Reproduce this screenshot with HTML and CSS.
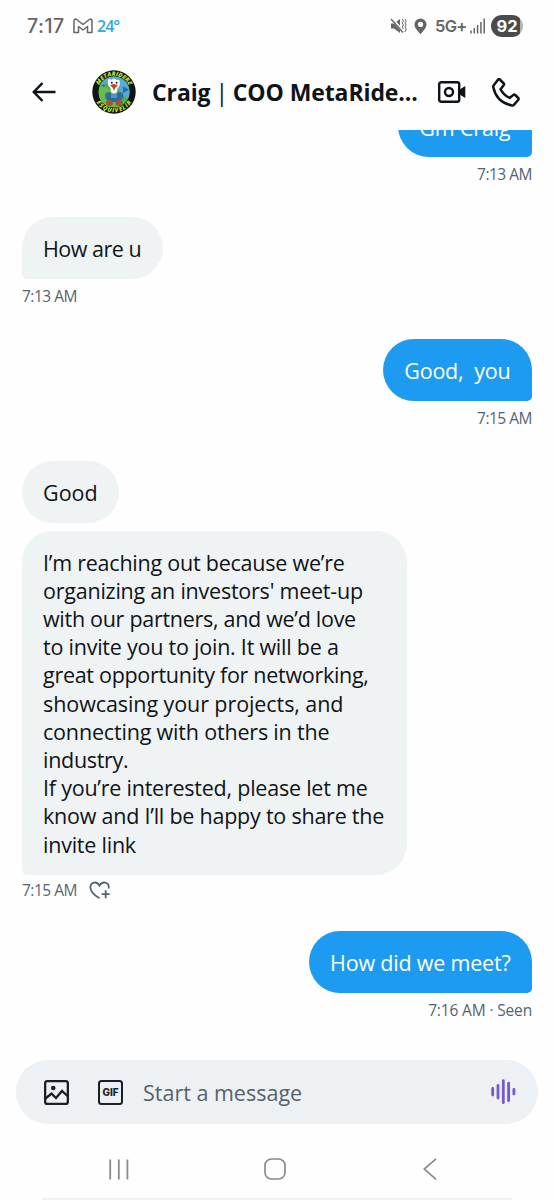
FILE: index.html
```html
<!DOCTYPE html>
<html lang="en">
<head>
<meta charset="utf-8">
<title>Messages</title>
<link rel="stylesheet" href="styles.css">
</head>
<body>
<div class="screen">
  <div class="status">
    <div class="status-left">
      <span class="clock">7:17</span>
      <svg class="mail" width="20" height="16" viewBox="0 0 20 16" fill="none" stroke="#666" stroke-width="1.500" stroke-linejoin="round"><path d="M1 14.500V3Q1 1 3 1L10 6.500 17 1Q19 1 19 3V14.500H14.500V8.500L10 12 5.500 8.500V14.500Z"/></svg>
      <span class="temp">24°</span>
    </div>
    <div class="status-right">
      <svg width="17" height="16" viewBox="0 0 17 16"><path d="M1 5.500H4L10 1V15L4 10.500H1Z" fill="#666"/><path d="M1.500 .5 14 14.500" stroke="#fff" stroke-width="3"/><path d="M1 1 13 14.500" stroke="#666" stroke-width="1.500"/><path d="M12 1l1.500 2L12 5l1.500 2L12 9l1.500 2M15 1l1.200 2L15 5l1.200 2L15 9l1.200 2L15 14" fill="none" stroke="#666" stroke-width="1"/></svg>
      <svg class="pin" width="13" height="17" viewBox="0 0 13 17"><path fill="#666" fill-rule="evenodd" d="M6.500 .5a6 6 0 0 1 6 6c0 3.500-3 6-6 9.800C3.500 12.500.5 10 .5 6.500a6 6 0 0 1 6-6Zm0 3.300a2.600 2.600 0 1 0 0 5.200 2.600 2.600 0 0 0 0-5.200Z"/></svg>
      <span class="net">5G+</span>
      <svg class="signal" width="15" height="16" viewBox="0 0 15 16" stroke="#666" stroke-width="1.500"><path d="M1 15.500v-3M4.300 15.500V10M7.600 15.500V7M10.900 15.500V4M14.200 15.500V.5"/></svg>
      <span class="battery">92</span>
    </div>
  </div>
  <div class="header">
    <svg class="back" width="24" height="20" viewBox="0 0 24 20" fill="none" stroke="#0f1419" stroke-width="2.500"><path d="M23.500 10H2M10.500 1 1.800 10l8.700 9"/></svg>
    <svg class="avatar" width="44" height="44" viewBox="0 0 44 44">
      <defs>
        <clipPath id="disc"><circle cx="22" cy="22" r="15.500"/></clipPath>
        <path id="arc-top" d="M5.800 22a16.200 16.200 0 0 1 32.400 0"/>
        <path id="arc-bottom" d="M1.700 22a20.300 20.300 0 0 0 40.600 0"/>
      </defs>
      <circle cx="22" cy="22" r="21.700" fill="#101414"/>
      <g clip-path="url(#disc)">
        <rect width="44" height="44" fill="#4fb04c"/>
        <path d="M5 5h34v25q-8-3-12-10T14 13L5 17Z" fill="#59a9dc"/>
        <path d="M7 17q8-3 13 6t8 14H7Z" fill="#65bd50"/>
        <path d="M10 14l4 2-3 1ZM31 16l6 4-6 3Z" fill="#2374a5"/>
        <ellipse cx="16.500" cy="26" rx="3.500" ry="4" fill="#3d7094"/>
        <ellipse cx="28" cy="26" rx="3.500" ry="4" fill="#3d7094"/>
        <path d="M16 23h12l1 9H15Z" fill="#286b9e"/>
        <path d="M19 23h6v5h-6Z" fill="#5292bb"/>
        <ellipse cx="17.500" cy="33" rx="3.500" ry="3" fill="#a6542c"/>
        <ellipse cx="27" cy="33" rx="3.500" ry="3" fill="#a6542c"/>
      </g>
      <path d="M16 10q2-2 3.500 0Q22 7 24.500 10q3-1 3.500 2 0 5-2.500 6l-.5 4q-3 3-6 0l-.5-4Q15 15 16 10Z" fill="#fff"/>
      <circle cx="19.800" cy="12.800" r="1" fill="#222"/><circle cx="24.600" cy="12.800" r="1" fill="#222"/>
      <path d="M18 15.500q4-3 8 0l-2.500 2-1.500 3-1.500-3Z" fill="#c6432c"/>
      <text class="ring"><textPath href="#arc-top" startOffset="50%" text-anchor="middle" textLength="37">METARIDERZ</textPath></text>
      <text class="ring"><textPath href="#arc-bottom" startOffset="50%" text-anchor="middle" textLength="42">ESQUIVELIR</textPath></text>
    </svg>
    <div class="title">Craig <span class="bar">|</span> COO MetaRide...</div>
    <svg class="video" width="28" height="22" viewBox="0 0 28 22" fill="none" stroke="#0f1419" stroke-width="2.400"><rect x="1.200" y="1.200" width="20" height="19.600" rx="2"/><circle cx="11" cy="11" r="4"/><path d="M21 10 26.500 6.500v9L21 12" fill="#0f1419" stroke-width="1.600"/></svg>
    <svg class="phone" width="28" height="29" viewBox="0 0 28 29" fill="none" stroke="#0f1419" stroke-width="2.500" stroke-linejoin="round"><path d="M7.800 1.500 11.800 5.500Q12.500 6.300 11.700 7.200L8.500 11.200Q11.500 17 17.600 20L21.400 16.900Q22.300 16.200 23.200 17L26.300 20Q27 20.800 26.300 21.700L22 26.800Q21.200 27.600 19.900 27.400 4.500 24.500 1.300 9.300 1 7.800 2.100 6.800L6.200 1.500Q7 .7 7.800 1.500Z"/></svg>
  </div>
  <div class="thread">
    <div class="row out first"><div class="bubble"><span class="t-gm">Gm Craig</span></div><div class="meta">7:13 AM</div></div>
    <div class="row in"><div class="bubble"><span class="t-how">How are u</span></div><div class="meta">7:13 AM</div></div>
    <div class="row out"><div class="bubble"><span class="t-you">Good,&nbsp; you</span></div><div class="meta">7:15 AM</div></div>
    <div class="row in grouped"><div class="bubble round"><span class="t-good">Good</span></div></div>
    <div class="row in long"><div class="bubble"><span>I’m reaching out because we’re</span><span>organizing an investors' meet-up</span><span class="tight">with our partners, and we’d love</span><span>to invite you to join. It will be a</span><span class="tight">great opportunity for networking,</span><span class="loose">showcasing your projects, and</span><span class="open">connecting with others in the</span><span class="tight">industry.</span><span>If you’re interested, please let me</span><span>know and I’ll be happy to share the</span><span>invite link</span></div>
      <div class="meta">7:15 AM <svg class="heart" width="22" height="19" viewBox="0 0 22 19" fill="none" stroke="#536471" stroke-width="1.800"><path d="M10.500 17.300C5.500 14.500 1.400 11 1.400 6.300 1.400 1 7.800-.3 10.500 4.600 13.200-.3 19.800 1 19.800 6.500V7.500M16.700 9.200v8M12.700 13.200h8"/></svg></div></div>
    <div class="row out"><div class="bubble"><span class="t-meet">How did we meet?</span></div><div class="meta seen">7:16 AM · Seen</div></div>
  </div>
  <div class="composer">
    <svg width="25" height="25" viewBox="0 0 25 25" fill="none" stroke="#1b1f25" stroke-width="2.300"><rect x="1.150" y="1.150" width="22.700" height="22.700" rx="2.200"/><path d="M1.500 18.500 7.500 13.500 12 18 18 11 24 16.500"/><circle cx="9.300" cy="8" r="2.300" fill="#1b1f25" stroke="none"/></svg>
    <div class="gif">GIF</div>
    <div class="placeholder">Start a message</div>
    <svg class="voice" width="25" height="26" viewBox="0 0 25 26" stroke="#7856d0" stroke-width="2.800" stroke-linecap="round"><path d="M1.700 9.500v6.500M7 6.500v12.500M12.300 1.700v22M17.600 4.200v17.500M22.900 10.500v4.500"/></svg>
  </div>
  <div class="nav">
    <svg width="20" height="21" viewBox="0 0 20 21" stroke="#8b8b8b" stroke-width="1.800"><path d="M1.200 .5v20M9.800 .5v20M18.400 .5v20"/></svg>
    <svg class="home" width="22" height="22" viewBox="0 0 22 22" fill="none" stroke="#8b8b8b" stroke-width="1.700"><rect x="1" y="1" width="20" height="20" rx="6.500"/></svg>
    <svg width="14" height="22" viewBox="0 0 14 22" fill="none" stroke="#8b8b8b" stroke-width="1.700"><path d="M13 .8 1.200 11 13 21.300"/></svg>
  </div>
  <div class="edge"></div>
</div>
</body>
</html>
```
FILE: styles.css
```css
* { box-sizing: border-box; }
body { margin: 0; background: #fff; }
svg { display: block; flex: none; }
.screen {
  width: 554px; height: 1200px; overflow: hidden;
  display: flex; flex-direction: column;
  background: #fefefe; color: #0f1419;
  font-family: "Open Sans", "Noto Sans", sans-serif;
  white-space: nowrap;
}
.status {
  height: 52px; padding: 0 31px 0 27px; flex: none;
  display: flex; justify-content: space-between; align-items: center;
  color: #666; font-family: Inter, Roboto, sans-serif;
}
.status-left, .status-right { display: flex; align-items: center; }
.clock { font-size: 19.500px; font-weight: 500; width: 37px; letter-spacing: .5px; }
.mail { margin-left: 9px; }
.temp { margin-left: 4px; color: #2fa9e0; font: 600 16px "Open Sans", sans-serif; letter-spacing: -1px; }
.pin { margin-left: 7px; }
.net { margin-left: 8px; width: 31px; font-size: 16.500px; font-weight: 600; letter-spacing: -.7px; }
.signal { margin-left: 4px; }
.battery {
  margin-left: 6px; width: 32px; height: 22px; border-radius: 11px;
  background: linear-gradient(90deg, #4b4b4b 92%, #b5b5b5 92%);
  color: #fff; font-size: 16.500px; line-height: 22px; font-weight: 700; text-align: center;
}
.header { height: 78px; flex: none; display: flex; align-items: center; padding: 2px 34px 0 32px; }
.back { margin-right: 36px; }
.avatar { margin-right: 16px; }
.ring { font: italic 800 6px "Open Sans", sans-serif; fill: #b9e52d; }
.title { width: 286px; font-size: 23px; line-height: 30px; font-weight: 700; letter-spacing: -.1px; }
.bar { font-weight: 400; margin: 0 -1px; }
.phone { margin-left: 26px; }

.thread { height: 919px; flex: none; padding: 0 22px; overflow: hidden; }
.row { display: flex; flex-direction: column; height: 122px; align-items: flex-start; }
.row.first { margin-top: -35.500px; }
.row.out { align-items: flex-end; }
.row.grouped { height: 70px; }
.row.long { height: 400px; }
.bubble {
  padding: 18px 21.500px 15.800px 21px;
  border-radius: 31px 31px 31px 5px;
  background: #eff3f4; font-size: 21.500px; line-height: 28.200px;
}
.out .bubble { border-radius: 31px 31px 5px 31px; background: #1d9bf0; color: #fff; }
.first .bubble { padding-top: 19px; padding-bottom: 14.800px; }
.in .bubble.round { border-radius: 31px; }
.long .bubble { width: 385px; letter-spacing: -.23px; }
.long .tight { letter-spacing: -.29px; }
.long .loose { letter-spacing: -.08px; }
.long .open { letter-spacing: -.18px; }
.bubble span { display: block; }
.t-gm { letter-spacing: -.15px; }
.t-how { letter-spacing: -.5px; }
.t-you { letter-spacing: -.2px; }
.t-meet { letter-spacing: -.2px; }
.meta {
  display: flex; align-items: center; margin-top: 7.500px; height: 20px;
  color: #536471; font-size: 15.500px; line-height: 20px; letter-spacing: -.5px;
}
.meta.seen { letter-spacing: -.15px; }
.long .meta { margin-top: 5.500px; }
.heart { margin-left: 12px; }
.composer {
  height: 64px; flex: none; margin: 11px 16px 0 16px; padding: 0 22px 0 28px;
  border-radius: 32px; background: #edf1f4;
  display: flex; align-items: center;
}
.gif {
  width: 25px; height: 25px; margin-left: 29px; border: 2.300px solid #1b1f25; border-radius: 3.500px;
  display: flex; justify-content: center;
  font: 800 10px/21px Inter, sans-serif; color: #1b1f25;
}
.placeholder { margin-left: 20px; flex: 1; color: #56626c; font-size: 21.500px; }
.nav { height: 74px; flex: none; padding: 16px 117px 0 109px; display: flex; justify-content: space-between; align-items: center; }
.home { margin-right: 3px; }
.edge { height: 2px; margin: 0 42px; flex: none; background: #f0f0f2; }
```
